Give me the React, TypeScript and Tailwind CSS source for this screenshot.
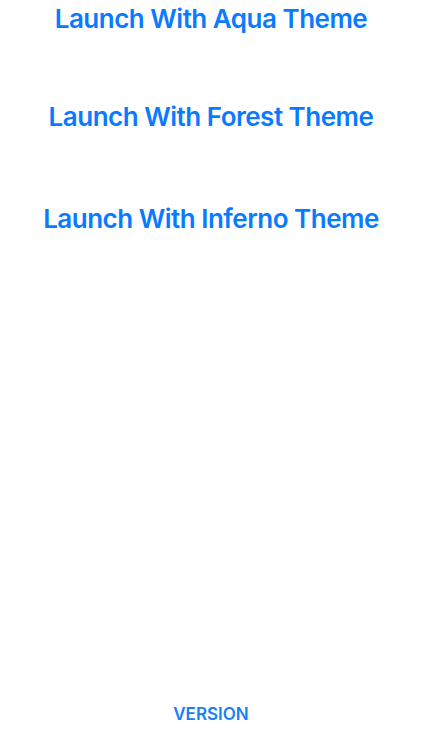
import React from "react";

export default function App() {
  return (
    <div className="w-[422px] h-[750px] bg-white flex flex-col items-center" style={{ fontFamily: "Inter, 'Noto Sans', sans-serif" }}>
      <div className="flex flex-col items-center mt-[3px]">
        <button className="h-[32px] text-[26px] font-semibold text-[#0a7aff] leading-[32px] tracking-[-0.5px]">
          Launch With Aqua Theme
        </button>
        <button className="mt-[66px] h-[32px] text-[26px] font-semibold text-[#0a7aff] leading-[32px] tracking-[-0.5px]">
          Launch With Forest Theme
        </button>
        <button className="mt-[70px] h-[32px] text-[26px] font-semibold text-[#0a7aff] leading-[32px] tracking-[-0.5px]">
          Launch With Inferno Theme
        </button>
      </div>
      <div className="flex-1" />
      <div className="mb-[26px] text-[17px] font-semibold text-[#1a7ff0] leading-[20px]">VERSION</div>
    </div>
  );
}
